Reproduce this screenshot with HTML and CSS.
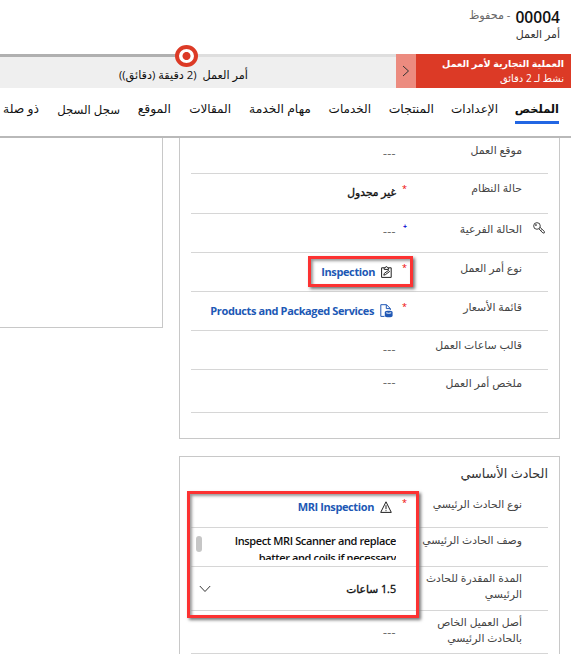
FILE: index.html
```
<!DOCTYPE html>
<html lang="ar" dir="rtl">
<head>
<meta charset="utf-8">
<title>أمر العمل 00004</title>
<link rel="stylesheet" href="styles.css">
</head>
<body>
<header class="head">
  <div class="record"><span class="number">00004</span><span class="saved">- محفوظ</span></div>
  <div class="entity">أمر العمل</div>
</header>
<section class="process">
  <div class="flow-name"><strong>العملية التجارية لأمر العمل</strong><span>نشط لـ 2 دقائق</span></div>
  <div class="flow-toggle"><svg width="8" height="12" viewBox="0 0 8 12"><path d="M1 1l5.5 5L1 11"/></svg></div>
  <div class="stage">
    <div class="track"></div>
    <span class="dot"></span>
    <span class="stage-name">أمر العمل&nbsp; (2 دقيقة (دقائق))</span>
  </div>
</section>
<nav class="tabs">
  <a class="active">الملخص</a><a>الإعدادات</a><a>المنتجات</a><a>الخدمات</a><a>مهام الخدمة</a><a>المقالات</a><a>الموقع</a><a>سجل السجل</a><a>ذو صلة</a>
</nav>
<main class="content">
  <div class="column">
    <section class="card first">
      <div class="row r1"><span class="label">موقع العمل</span><span class="value empty">---</span></div>
      <div class="row r2"><span class="label">حالة النظام</span><i class="req">*</i><span class="value">غير مجدول</span></div>
      <div class="row r3"><svg class="key" width="12" height="12" viewBox="0 0 13 13"><circle cx="4.3" cy="4.3" r="3.6"/><circle cx="3.2" cy="3.3" r=".6"/><path d="M6.5 7.5l4.3 4.5 1.5-.2v-1.6L7.6 5.7M8.5 9.2l1-.8"/></svg><span class="label">الحالة الفرعية</span><i class="req rec">+</i><span class="value empty">---</span></div>
      <div class="row r4"><span class="label">نوع أمر العمل</span><i class="req">*</i><span class="value link"><svg width="11" height="12" viewBox="0 0 11 12"><path d="M3 1.8H.6v9.6h9.6V1.8H7.8M3.2 3.4V1.7h1.2c0-1.5 2-1.5 2 0h1.2v1.7zM2.8 9.2l.5-1.8 4.2-3 1 1.2-4 3z"/></svg><bdi>Inspection</bdi></span><b class="mark mark-type"></b></div>
      <div class="row r5"><span class="label">قائمة الأسعار</span><i class="req">*</i><span class="value link"><svg class="blue" width="13" height="14" viewBox="0 0 13 14"><path d="M4.5 12.4H.8V.7h5.7l3.8 3.8V6M6.3.7v3.9h3.9"/><path class="solid" d="M4.8 8C4.8 6.2 12.6 6.2 12.6 8V11.8C12.6 13.8 4.8 13.8 4.8 11.8z"/><path class="shine" d="M6.2 8.8q2.5 1 5 0"/></svg><bdi>Products and Packaged Services</bdi></span></div>
      <div class="row r6"><span class="label">قالب ساعات العمل</span><span class="value empty">---</span></div>
      <div class="row r7"><span class="label">ملخص أمر العمل</span><span class="value empty">---</span></div>
    </section>
    <section class="card second">
      <h2>الحادث الأساسي</h2>
      <div class="row s1"><span class="label">نوع الحادث الرئيسي</span><i class="req">*</i><span class="value link"><svg width="12" height="12" viewBox="0 0 12 12"><path d="M6 .8L.7 11.4h10.6zM6 4.2v4M6 9.2v1"/></svg><bdi>MRI Inspection</bdi></span><b class="mark mark-incident"></b></div>
      <div class="row s2"><span class="label">وصف الحادث الرئيسي</span><span class="value memo"><bdi>Inspect MRI Scanner and replace<br>batter and coils if necessary</bdi></span><i class="thumb"></i></div>
      <div class="row s3"><span class="label">المدة المقدرة للحادث<br>الرئيسي</span><span class="value">1.5 ساعات</span><svg class="chevron" width="12" height="8" viewBox="0 0 12 8"><path d="M.8 1L6 6.5 11.2 1"/></svg></div>
      <div class="row s4"><span class="label">أصل العميل الخاص<br>بالحادث الرئيسي</span><span class="value empty">---</span></div>
    </section>
  </div>
  <aside class="card side"></aside>
</main>
</body>
</html>
```
FILE: styles.css
```
* { box-sizing: border-box; }
body { margin: 0; width: 571px; height: 654px; overflow: hidden; background: #fff; color: #111; font: 11px/16px "Open Sans", "DejaVu Sans", sans-serif; }
svg { fill: none; stroke: #333; stroke-width: 1; flex: none; }
.head { height: 54px; padding: 7px 11px 0 0; }
.record { display: flex; align-items: center; gap: 5px; height: 19px; white-space: nowrap; }
.number { font-size: 15.6px; font-weight: 600; color: #111; }
.saved { font-size: 11.2px; color: #666; padding-bottom: 3px; }
.entity { font-size: 11px; line-height: 15px; color: #333; }
.process { display: flex; height: 34px; background: #efefef; }
.flow-name { width: 155px; padding: 2px 7px 0 0; background: #dc3a26; color: #fff; font-size: 10px; line-height: 15px; white-space: nowrap; }
.flow-name strong, .flow-name span { display: block; }
.flow-name strong { font-size: 9.55px; }
.flow-toggle { width: 20px; display: flex; align-items: center; justify-content: center; background: #ec8b7f; }
.stage { flex: 1; position: relative; padding: 13px 148px 0 0; }
.track { position: absolute; inset: 0 0 auto 0; height: 3px; background: linear-gradient(to right, #b0b0b0 186px, #dedede 186px); }
.dot { position: absolute; left: 175px; top: -9px; width: 23px; height: 22px; border: 4px solid #dc3a26; border-radius: 50%; background: radial-gradient(circle, #dc3a26 3.6px, #fff 4.4px); }
.stage-name { font-size: 11.3px; white-space: nowrap; }
.tabs { height: 50px; display: flex; gap: 17px; padding: 11px 12px 0 0; border-bottom: 2px solid #b9b9b9; white-space: nowrap; font-size: 12.4px; line-height: 20px; }
.tabs a { height: 25px; flex: none; }
.tabs .active { width: 44px; font-weight: 700; font-size: 11.4px; border-bottom: 3px solid #2266e3; }
.tabs a:nth-child(2) { width: 47px; font-size: 12px; }
.tabs a:nth-child(3) { width: 46px; }
.tabs a:nth-child(4) { width: 43px; font-size: 12px; }
.tabs a:nth-child(5) { width: 63px; }
.tabs a:nth-child(6) { width: 43px; font-size: 12px; }
.tabs a:nth-child(7) { width: 34px; }
.tabs a:nth-child(8) { width: 64px; font-size: 11.7px; }
.content { display: flex; gap: 16px; padding-right: 11px; }
.card { border: 1px solid #c8c8c8; background: #fff; }
.column { width: 381px; flex: none; }
.first { border-top: 0; height: 301px; padding: 0 11px; }
.second { margin-top: 17px; height: 220px; padding: 0 11px; }
.side { width: 164px; height: 190px; border-top: 0; border-left: 0; flex: none; }
.row { position: relative; display: grid; grid-template-columns: 26px 108px 18px 1fr; border-bottom: 1px solid #d6d6d6; white-space: nowrap; }
.label { grid-column: 2; grid-row: 1; color: #444; font-size: 10.9px; }
.second .label { font-size: 10.8px; }
.req { grid-column: 3; grid-row: 1; color: #e00; font: 9px/12px "Open Sans", sans-serif; padding: 9px 7px 0 0; }
.rec { color: #00c; font-size: 7px; font-weight: 700; padding-top: 7px; }
.value { grid-column: 4; grid-row: 1; display: flex; align-items: center; color: #111; font-size: 10.7px; -webkit-text-stroke: .35px #111; }
.empty { color: #666; letter-spacing: .8px; -webkit-text-stroke: .3px #666; }
.link { color: #2058b5; gap: 6px; padding-right: 4px; padding-bottom: 1px; font-size: 11px; font-weight: 700; letter-spacing: -.39px; -webkit-text-stroke: 0; }
.link svg { stroke: #222; }
.link .blue { stroke: #2058b5; margin-right: -1px; }
.blue .solid { fill: #2058b5; stroke: none; }
.blue .shine { stroke: #fff; }
.key { grid-column: 1; grid-row: 1; margin: 8px 3px 0 0; }
.r1 { height: 36px; } .r1 .label { padding-top: 4px; } .r1 .value { padding-bottom: 5px; }
.r2 { height: 40px; } .r2 .label { padding-top: 6px; } .r2 .value { padding-bottom: 3px; }
.r3, .r4, .r5, .r6 { height: 39px; }
.r3 .value { padding-bottom: 4px; }
.r3 .label, .r4 .label, .r5 .label { padding-top: 7px; }
.r6 .label, .r7 .label { padding-top: 6px; } .r6 .value { padding-bottom: 2px; }
.r7 { height: 43px; } .r7 .label { padding-top: 5px; } .r7 .value { padding-bottom: 19px; }
.second h2 { margin: 0; height: 30px; padding-top: 7px; font-size: 12.8px; line-height: 18px; font-weight: 400; color: #333; }
.s1 { height: 41px; } .s1 .label { padding-top: 9px; } .s1 .req { padding-top: 10px; }
.s2 { height: 39px; } .s2 .label { padding-top: 4px; }
.s3 { height: 44px; } .s3 .label { padding-top: 3px; }
.s4 { height: 43px; } .s4 .label { padding-top: 3px; }
.memo { display: block; height: 32px; overflow: hidden; padding-top: 4px; font-size: 11px; font-weight: 600; line-height: 17px; letter-spacing: -.38px; text-align: right; -webkit-text-stroke: 0; }
.thumb { position: absolute; left: 5px; top: 8px; width: 6px; height: 16px; border-radius: 3px; background: #c6c6c6; }
.chevron { position: absolute; left: 8px; top: 18px; }
.mark { position: absolute; z-index: 2; border: 3px solid #fc3232; box-shadow: 2px 2px 3px #777, inset 2px 2px 3px #999; pointer-events: none; }
.mark-type { left: 117px; top: 3px; width: 105px; height: 31px; }
.mark-incident { left: -4px; top: 4px; width: 232px; height: 127px; }
```
